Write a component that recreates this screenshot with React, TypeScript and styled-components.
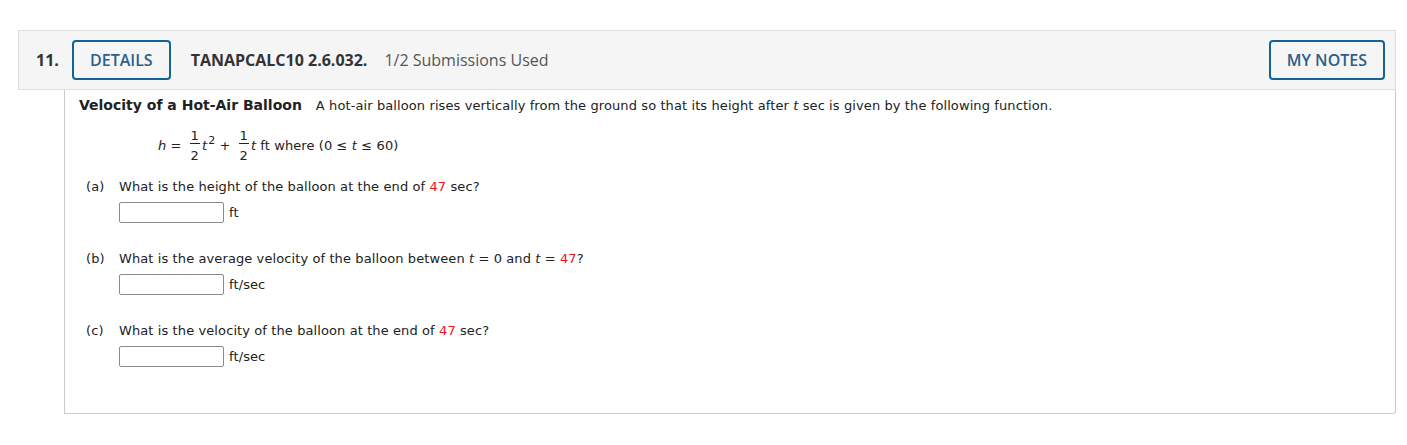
import styled, { createGlobalStyle } from 'styled-components'

const GlobalStyle = createGlobalStyle`
  body {
    margin: 0;
    background: #ffffff;
  }
`

const Page = styled.div`
  padding: 30px 11px 0 18px;
  width: 1378px;
`

const Header = styled.div`
  display: flex;
  align-items: center;
  height: 58px;
  background: #f5f5f5;
  border: 1px solid #dddddd;
  font-family: 'Open Sans', sans-serif;
  font-size: 16px;
  line-height: 20px;
  color: #333333;
`

const Number = styled.span`
  font-weight: 700;
  margin-left: 17px;
  width: 36px;
`

const OutlineButton = styled.button<{ $right?: number }>`
  height: 40px;
  padding: 0 16px;
  margin-right: ${p => p.$right ?? 0}px;
  border: 2px solid #11639a;
  border-radius: 4px;
  background: transparent;
  color: #2a5f8d;
  font-family: 'Open Sans', sans-serif;
  font-size: 16px;
  font-weight: 600;
  line-height: 18px;
`

const Code = styled.span`
  font-weight: 700;
  margin-left: 20px;
  color: #333333;
`

const Used = styled.span`
  margin-left: 17px;
  color: #555555;
`

const Spacer = styled.div`
  flex: 1;
`

const Body = styled.div`
  box-sizing: border-box;
  margin-left: 46px;
  border: 1px solid #cccccc;
  border-top: none;
  border-bottom-right-radius: 3px;
  height: 324px;
  padding: 5px 14px 0 14px;
  font-family: 'DejaVu Sans', Verdana, sans-serif;
  font-size: 13px;
  letter-spacing: 0.1px;
  color: #222222;
`

const Intro = styled.div`
  line-height: 20px;
`

const Title = styled.b`
  font-size: 14px;
  letter-spacing: 0;
  margin-right: 14px;
`

const Formula = styled.div`
  margin: 12px 0 0 79px;
  height: 36px;
  line-height: 36px;
`

const Frac = styled.span`
  display: inline-flex;
  flex-direction: column;
  align-items: stretch;
  vertical-align: middle;
  text-align: center;
  font-size: 13px;
  margin: 0 2px 0 8px;
`

const Num = styled.span`
  border-bottom: 1px solid #222222;
  padding: 0 1px;
  line-height: 14px;
`

const Den = styled.span`
  padding-top: 3px;
  line-height: 17px;
`

const Var = styled.i``

const Sup = styled.sup`
  font-size: 11px;
  line-height: 0;
  vertical-align: 6px;
  margin-left: 1px;
`

const Part = styled.div<{ $top: number }>`
  margin-top: ${p => p.$top}px;
`

const QuestionRow = styled.div`
  display: flex;
  line-height: 18px;
`

const Label = styled.span`
  width: 33px;
  margin-left: 7px;
`

const Red = styled.span`
  color: #e8141e;
`

const AnswerRow = styled.div`
  display: flex;
  align-items: center;
  margin: 6px 0 0 40px;
`

const AnswerInput = styled.input`
  box-sizing: border-box;
  width: 105px;
  height: 21px;
  padding: 1px;
  border: 1px solid #8a8a8a;
  border-radius: 2px;
  margin: 0;
`

const Unit = styled.span`
  margin-left: 5px;
`

export default function App() {
  return (
    <Page>
      <GlobalStyle />
      <Header>
        <Number>11.</Number>
        <OutlineButton>DETAILS</OutlineButton>
        <Code>TANAPCALC10 2.6.032.</Code>
        <Used>1/2 Submissions Used</Used>
        <Spacer />
        <OutlineButton $right={10}>MY NOTES</OutlineButton>
      </Header>
      <Body>
        <Intro>
          <Title>Velocity of a Hot-Air Balloon</Title>
          A hot-air balloon rises vertically from the ground so that its height after <Var>t</Var> sec is given by the following function.
        </Intro>
        <Formula>
          <Var>h</Var> =
          <Frac>
            <Num>1</Num>
            <Den>2</Den>
          </Frac>
          <Var>t</Var>
          <Sup>2</Sup> +
          <Frac>
            <Num>1</Num>
            <Den>2</Den>
          </Frac>
          <Var>t</Var> ft where (0 ≤ <Var>t</Var> ≤ 60)
        </Formula>
        <Part $top={14}>
          <QuestionRow>
            <Label>(a)</Label>
            <span>What is the height of the balloon at the end of <Red>47</Red> sec?</span>
          </QuestionRow>
          <AnswerRow>
            <AnswerInput />
            <Unit>ft</Unit>
          </AnswerRow>
        </Part>
        <Part $top={27}>
          <QuestionRow>
            <Label>(b)</Label>
            <span>What is the average velocity of the balloon between <Var>t</Var> = 0 and <Var>t</Var> = <Red>47</Red>?</span>
          </QuestionRow>
          <AnswerRow>
            <AnswerInput />
            <Unit>ft/sec</Unit>
          </AnswerRow>
        </Part>
        <Part $top={27}>
          <QuestionRow>
            <Label>(c)</Label>
            <span>What is the velocity of the balloon at the end of <Red>47</Red> sec?</span>
          </QuestionRow>
          <AnswerRow>
            <AnswerInput />
            <Unit>ft/sec</Unit>
          </AnswerRow>
        </Part>
      </Body>
    </Page>
  )
}
